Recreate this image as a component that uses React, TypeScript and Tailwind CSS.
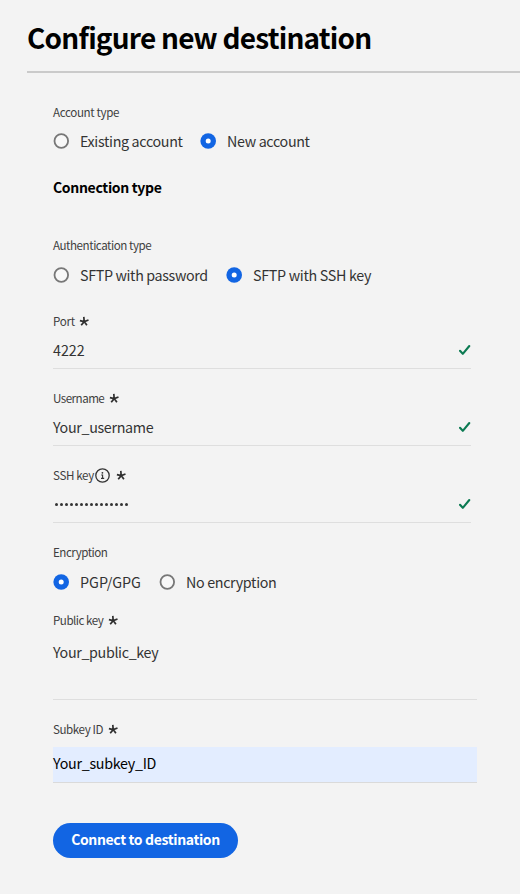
import React from 'react';

function Radio({ checked, label, labelClass }: { checked?: boolean; label: string; labelClass: string }) {
  return (
    <div className="flex items-center gap-[11px]">
      <svg width="16" height="16" viewBox="0 0 16 16" className="shrink-0">
        {checked ? (
          <>
            <circle cx="8.2" cy="8" r="7.8" fill="#1265e3" />
            <circle cx="8.2" cy="8" r="2.5" fill="#fff" />
          </>
        ) : (
          <circle cx="8.3" cy="8" r="6.8" fill="#f8f8f8" stroke="#777" strokeWidth="1.8" />
        )}
      </svg>
      <span className={`block text-[14.3px] whitespace-nowrap ${labelClass}`}>{label}</span>
    </div>
  );
}

function Star() {
  return (
    <svg width="10" height="10" viewBox="0 0 10 10" className="shrink-0" stroke="#2f2f2f" strokeWidth="1.7" fill="none">
      <path d="M5.2 5.6L4.8 .9M5.2 5.6L.9 4.6M5.2 5.6L9.5 4M5.2 5.6L2.2 9.3M5.2 5.6L7.9 9.3" />
    </svg>
  );
}

function Info() {
  return (
    <svg width="15" height="15" viewBox="0 0 15 15" className="shrink-0" fill="none" stroke="#333">
      <circle cx="7.5" cy="7.5" r="6.7" strokeWidth="1.3" />
      <circle cx="7.4" cy="4.8" r="0.9" fill="#333" stroke="none" />
      <path d="M6.2 7h1.4v3.5M6 10.4h3.2" strokeWidth="1.1" />
    </svg>
  );
}

function Check() {
  return (
    <svg width="12" height="12" viewBox="0 0 12 12" className="shrink-0" fill="none" stroke="#0b7a52" strokeWidth="2.1" strokeLinecap="round" strokeLinejoin="round">
      <path d="M1 6.8L3.8 9.8L10.3 2" />
    </svg>
  );
}

function Label({ text, textClass, required, info }: { text: string; textClass: string; required?: boolean; info?: boolean }) {
  return (
    <div className="flex h-5 items-center text-[11.6px] text-[#3f3f3f]">
      <span className={`whitespace-nowrap ${textClass}`}>{text}</span>
      {info && <Info />}
      {required && (
        <span className="ml-[6px]">
          <Star />
        </span>
      )}
    </div>
  );
}

function Field({ label, labelClass, value, info }: { label: string; labelClass: string; value: string; info?: boolean }) {
  return (
    <div className="h-[77px] w-[418px]">
      <Label text={label} textClass={labelClass} required info={info} />
      <div className="flex h-[38px] items-center justify-between border-b-[1.5px] border-[#dedede]">
        {info ? (
          <div className="ml-[1.5px] flex gap-[2px] pt-px">
            {value.split('').map((_, i) => (
              <span key={i} className="size-[3px] rounded-full bg-[#333]" />
            ))}
          </div>
        ) : (
          <span className={value === '4222' ? 'text-[14.3px]' : 'text-[14.3px] tracking-[-0.33px]'}>{value}</span>
        )}
        <Check />
      </div>
    </div>
  );
}

export default function App() {
  return (
    <main className="h-[894px] w-[520px] overflow-hidden bg-[#f3f3f3] font-['Noto_Sans_CJK_SC',sans-serif] leading-5 text-[#333]">
      <header className="ml-[27px] flex h-[73px] items-center border-b-2 border-[#cacaca] pt-[2px]">
        <h1 className="text-[28px] leading-9 font-bold tracking-[-0.78px] whitespace-nowrap text-black">Configure new destination</h1>
      </header>
      <div className="pl-[53px]">
        <div className="pt-[29px]">
          <Label text="Account type" textClass="w-[67px] tracking-[-0.36px]" />
        </div>
        <div className="mt-[9px] flex h-5 items-center gap-[17px]">
          <Radio label="Existing account" labelClass="w-[103px] tracking-[-0.34px]" />
          <Radio checked label="New account" labelClass="w-[84px] tracking-[-0.34px]" />
        </div>
        <h2 className="mt-[26px] text-[14px] font-bold tracking-[-0.32px] text-black">Connection type</h2>
        <div className="mt-[38px]">
          <Label text="Authentication type" textClass="w-[100px] tracking-[-0.45px]" />
        </div>
        <div className="mt-[10px] flex h-5 items-center gap-[17px]">
          <Radio label="SFTP with password" labelClass="w-[129px] tracking-[-0.36px]" />
          <Radio checked label="SFTP with SSH key" labelClass="w-[120px] tracking-[-0.31px]" />
        </div>
        <div className="mt-[26px]">
          <Field label="Port" labelClass="w-[20px] tracking-[-0.3px]" value="4222" />
          <Field label="Username" labelClass="w-[50px] tracking-[-0.52px]" value="Your_username" />
          <Field label="SSH key" labelClass="w-[42px] tracking-[-0.36px]" value="•••••••••••••••" info />
        </div>
        <Label text="Encryption" textClass="w-[54px] tracking-[-0.5px]" />
        <div className="mt-[10px] flex h-5 items-center gap-[17px]">
          <Radio checked label="PGP/GPG" labelClass="w-[62px]" />
          <Radio label="No encryption" labelClass="w-[92px] tracking-[-0.34px]" />
        </div>
        <div className="mt-[18px] w-[424px]">
          <Label text="Public key" textClass="w-[49px] tracking-[-0.5px]" required />
          <div className="h-[70px] border-b-[1.5px] border-[#dedede] pt-[12px] text-[14.3px] tracking-[-0.35px]">Your_public_key</div>
          <div className="mt-[19px]">
            <Label text="Subkey ID" textClass="w-[49px] tracking-[-0.42px]" required />
          </div>
          <div className="mt-[8px] flex h-9 items-center border-b-[1.5px] border-[#dadada] bg-[#e3edff] pb-[4px] text-[14.3px] tracking-[-0.28px] text-black">Your_subkey_ID</div>
        </div>
        <button className="mt-10 flex h-[35px] w-[185px] items-center justify-center rounded-full bg-[#1265e3] pb-[3px] text-[14px] font-bold tracking-[-0.36px] whitespace-nowrap text-white">Connect to destination</button>
      </div>
    </main>
  );
}
